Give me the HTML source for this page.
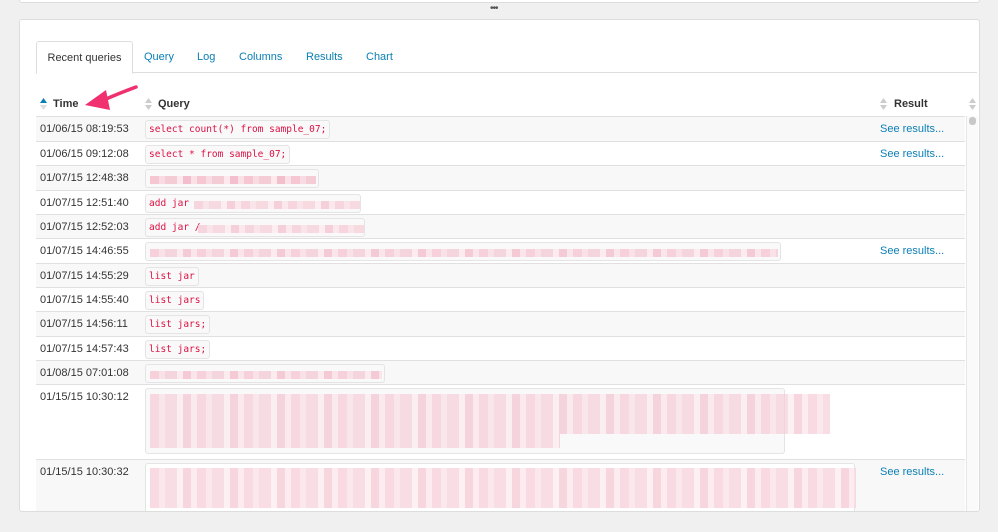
<!DOCTYPE html>
<html><head><meta charset="utf-8"><style>
*{margin:0;padding:0;box-sizing:border-box}
body{width:998px;height:532px;background:#f0f0f0;font-family:"Liberation Sans",sans-serif;font-size:11px;color:#333;position:relative;overflow:hidden}
.top{position:absolute;left:19px;top:-5px;width:961px;height:8px;background:#fff;border:1px solid #ddd;border-radius:0 0 3px 3px}
.dots{position:absolute;left:490px;top:3px;font-size:10px;color:#555;letter-spacing:-1px}
.card{position:absolute;left:19px;top:19px;width:961px;height:493px;background:#fff;border:1px solid #ddd;border-radius:3px;overflow:hidden}
.tabs{position:absolute;left:16px;top:21px;width:941px;height:32px;border-bottom:1px solid #ddd}
.tab{position:absolute;top:1px;height:32px;line-height:31px;font-size:11px;color:#0b7fb5}
.tab.act{top:0;left:0;width:97px;border:1px solid #ddd;border-bottom:1px solid #fff;border-radius:3px 3px 0 0;background:#fff;color:#333;text-align:center;height:33px;line-height:32px}
.th{position:absolute;top:78px;font-weight:bold;font-size:11px;color:#333}
.si{position:absolute;width:7px;height:12px}
.row{position:absolute;left:16px;width:929px;border-top:1px solid #e0e0e0}
.g{background:#f8f8f8}
.t{position:absolute;left:4px;top:6px;font-size:11px;color:#333}
.c{position:absolute;left:109px;top:3px;height:19px;border:1px solid #e4e4e4;border-radius:3px;background:#f9f9f9;font-family:"DejaVu Sans Mono","Liberation Mono",monospace;font-size:9.5px;color:#dd1144;padding:3px 3px;white-space:pre}
.bl{position:absolute;background:repeating-linear-gradient(90deg,#f6c6d2 0 9px,#f9dbe3 9px 15px,#f4ccd6 15px 27px,#fce8ed 27px 33px,#f3bfcc 33px 41px,#fae0e7 41px 47px)}
.r{position:absolute;left:844px;top:6px;color:#0b7fb5;font-size:11px}
.sb{position:absolute;left:946px;top:96px;width:12px;height:397px;background:#fafafa;border-left:1px solid #e6e6e6}
.sb i{position:absolute;left:2px;top:1px;width:7px;height:8px;border-radius:3px;background:#c8c8c8}
</style></head><body>
<div class="top"></div><div class="dots">•••</div>
<div class="card">
 <div class="tabs">
  <div class="tab act">Recent queries</div>
  <div class="tab" style="left:108px">Query</div>
  <div class="tab" style="left:161px">Log</div>
  <div class="tab" style="left:203px">Columns</div>
  <div class="tab" style="left:270px">Results</div>
  <div class="tab" style="left:330px">Chart</div>
 </div>
 <svg class="si" style="left:20px;top:78px" viewBox="0 0 7 12"><path d="M0 5L3.5 0L7 5Z" fill="#0b7fb5"/><path d="M0 7L3.5 12L7 7Z" fill="#ddd"/></svg>
 <div class="th" style="left:33px">Time</div>
 <svg class="si" style="left:125px;top:78px" viewBox="0 0 7 12"><path d="M0 5L3.5 0L7 5Z" fill="#ccc"/><path d="M0 7L3.5 12L7 7Z" fill="#ccc"/></svg>
 <div class="th" style="left:138px">Query</div>
 <svg class="si" style="left:860px;top:78px" viewBox="0 0 7 12"><path d="M0 5L3.5 0L7 5Z" fill="#ccc"/><path d="M0 7L3.5 12L7 7Z" fill="#ccc"/></svg>
 <div class="th" style="left:874px">Result</div>
 <svg class="si" style="left:949px;top:78px" viewBox="0 0 7 12"><path d="M0 5L3.5 0L7 5Z" fill="#ccc"/><path d="M0 7L3.5 12L7 7Z" fill="#ccc"/></svg>
 <svg style="position:absolute;left:60px;top:63px" width="60" height="30" viewBox="0 0 60 30"><path d="M56 4 Q40 10 26 16" stroke="#f0306f" stroke-width="3.5" fill="none" stroke-linecap="round"/><path d="M5 22 L26 7 L30 27 Z" fill="#f0306f"/></svg>

 <div class="row g" style="top:96px;height:25px"><div class="t">01/06/15 08:19:53</div><div class="c">select count(*) from sample_07;</div><div class="r">See results...</div></div>
 <div class="row" style="top:121px;height:24px"><div class="t">01/06/15 09:12:08</div><div class="c">select * from sample_07;</div><div class="r">See results...</div></div>
 <div class="row g" style="top:145px;height:25px"><div class="t">01/07/15 12:48:38</div><div class="c" style="width:174px"></div><div class="bl" style="left:114px;top:10px;width:166px;height:8px"></div></div>
 <div class="row" style="top:170px;height:24px"><div class="t">01/07/15 12:51:40</div><div class="c" style="width:216px">add jar </div><div class="bl" style="left:158px;top:10px;width:166px;height:8px;opacity:.7"></div></div>
 <div class="row g" style="top:194px;height:24px"><div class="t">01/07/15 12:52:03</div><div class="c" style="width:220px">add jar /</div><div class="bl" style="left:162px;top:10px;width:166px;height:8px;opacity:.7"></div></div>
 <div class="row" style="top:218px;height:25px"><div class="t">01/07/15 14:46:55</div><div class="c" style="width:636px"></div><div class="bl" style="left:114px;top:10px;width:628px;height:8px;opacity:.8"></div><div class="r">See results...</div></div>
 <div class="row g" style="top:243px;height:24px"><div class="t">01/07/15 14:55:29</div><div class="c">list jar</div></div>
 <div class="row" style="top:267px;height:24px"><div class="t">01/07/15 14:55:40</div><div class="c">list jars</div></div>
 <div class="row g" style="top:291px;height:25px"><div class="t">01/07/15 14:56:11</div><div class="c">list jars;</div></div>
 <div class="row" style="top:316px;height:24px"><div class="t">01/07/15 14:57:43</div><div class="c">list jars;</div></div>
 <div class="row g" style="top:340px;height:24px"><div class="t">01/08/15 07:01:08</div><div class="c" style="width:240px"></div><div class="bl" style="left:114px;top:10px;width:232px;height:8px;opacity:.8"></div></div>
 <div class="row" style="top:364px;height:75px"><div class="t">01/15/15 10:30:12</div><div class="c" style="width:640px;height:66px"></div><div class="bl" style="left:114px;top:9px;width:680px;height:40px;opacity:.65"></div><div class="bl" style="left:114px;top:49px;width:410px;height:14px;opacity:.65"></div></div>
 <div class="row g" style="top:439px;height:60px"><div class="t">01/15/15 10:30:32</div><div class="c" style="width:710px;height:60px;background:#fff"></div><div class="bl" style="left:114px;top:8px;width:706px;height:40px;opacity:.65"></div><div class="r">See results...</div></div>
 <div class="sb"><i></i></div>
</div>
</body></html>
